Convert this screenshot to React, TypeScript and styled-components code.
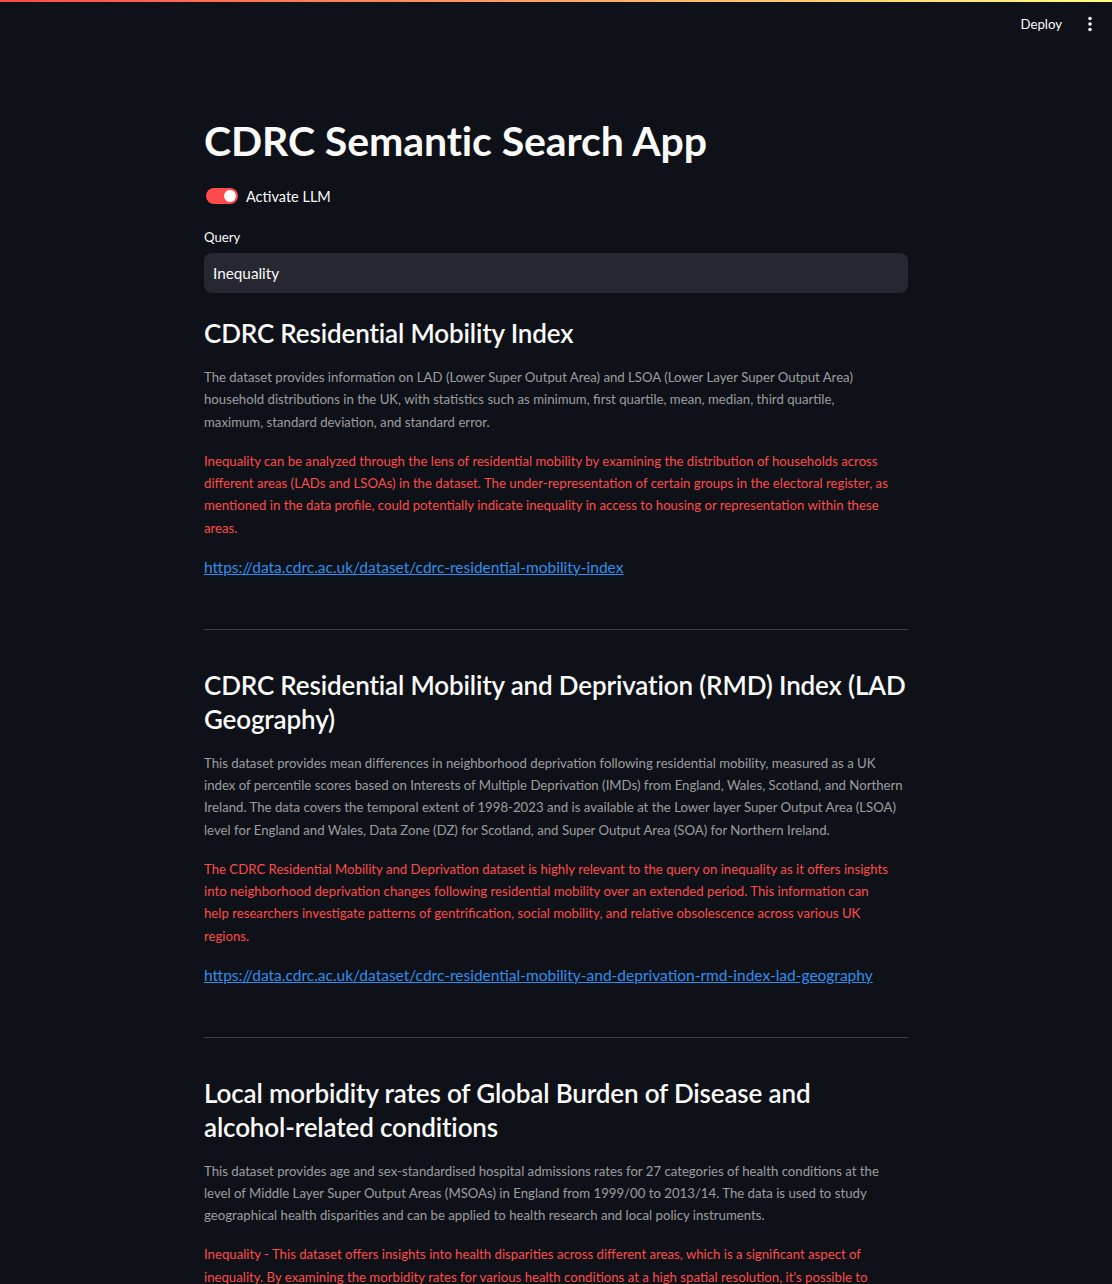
import React from "react";
import styled, { createGlobalStyle } from "styled-components";

const GlobalStyle = createGlobalStyle`
  html, body {
    margin: 0;
    padding: 0;
    background: #0e1117;
    color: #fafafa;
    font-family: Lato, "Noto Sans", sans-serif;
  }
  * { box-sizing: border-box; }
`;

const Header = styled.header`
  height: 60px;
  display: flex;
  flex-direction: column;
`;

const Decoration = styled.div`
  height: 2px;
  background: linear-gradient(90deg, #ff4b4b, #fffd80);
`;

const Toolbar = styled.div`
  height: 44px;
  display: flex;
  align-items: center;
  justify-content: flex-end;
  padding-right: 6px;
`;

const DeployButton = styled.button`
  background: transparent;
  border: none;
  color: #fafafa;
  font-family: inherit;
  font-size: 13.2px;
  padding: 4px 12px;
  cursor: pointer;
`;

const MenuButton = styled.button`
  width: 32px;
  height: 32px;
  background: transparent;
  border: none;
  display: flex;
  align-items: center;
  justify-content: center;
  padding: 0;
  cursor: pointer;
`;

const Main = styled.main`
  width: 704px;
  margin: 0 auto;
  padding: 55px 0 60px;
  display: flex;
  flex-direction: column;
`;

const Title = styled.h1`
  margin: 0;
  font-size: 41px;
  font-weight: 700;
  line-height: 52.8px;
  letter-spacing: -0.1px;
`;

const ToggleRow = styled.label`
  margin-top: 16.5px;
  height: 24px;
  display: flex;
  align-items: center;
  gap: 8px;
  padding-left: 2px;
  font-size: 14.5px;
`;

const Track = styled.span<{ $on: boolean }>`
  width: 32px;
  height: 16px;
  border-radius: 8px;
  background: ${(p) => (p.$on ? "#ff4b4b" : "#31333f")};
  display: flex;
  align-items: center;
  justify-content: ${(p) => (p.$on ? "flex-end" : "flex-start")};
  padding: 0 2px;
`;

const Knob = styled.span`
  width: 12px;
  height: 12px;
  border-radius: 50%;
  background: #ffffff;
`;

const FieldLabel = styled.div`
  margin-top: 18.5px;
  font-size: 13.2px;
  line-height: 21px;
`;

const Input = styled.div`
  margin-top: 5.5px;
  height: 40px;
  border-radius: 8px;
  background: #262730;
  display: flex;
  align-items: center;
  padding-left: 9px;
  font-size: 15.3px;
  color: #fafafa;
`;

const Section = styled.section<{ $first?: boolean }>`
  margin-top: ${(p) => (p.$first ? "24px" : "0")};
  display: flex;
  flex-direction: column;
`;

const Heading = styled.h3`
  margin: 0;
  font-size: 26px;
  font-weight: 600;
  line-height: 33.6px;
  letter-spacing: -0.15px;
  white-space: pre-line;
`;

const Caption = styled.p<{ $tone: "muted" | "red" }>`
  margin: ${(p) => (p.$tone === "muted" ? "15px" : "16.4px")} 0 0;
  font-size: 13.2px;
  line-height: 22.4px;
  white-space: pre-line;
  color: ${(p) => (p.$tone === "muted" ? "rgba(250, 250, 250, 0.6)" : "#ff4b4b")};
`;

const LinkLine = styled.a`
  margin-top: 15.5px;
  font-size: 15.5px;
  line-height: 25.6px;
  color: #2f8ff0;
  text-decoration: underline;
  align-self: flex-start;
`;

const Divider = styled.hr`
  width: 100%;
  margin: 48.6px 0 39.5px;
  border: none;
  border-top: 1px solid rgba(250, 250, 250, 0.2);
`;

type Result = { title: string[]; description: string[]; relevance: string[]; url: string };

const results: Result[] = [
  {
    title: ["CDRC Residential Mobility Index"],
    description: [
      "The dataset provides information on LAD (Lower Super Output Area) and LSOA (Lower Layer Super Output Area)",
      "household distributions in the UK, with statistics such as minimum, first quartile, mean, median, third quartile,",
      "maximum, standard deviation, and standard error.",
    ],
    relevance: [
      "Inequality can be analyzed through the lens of residential mobility by examining the distribution of households across",
      "different areas (LADs and LSOAs) in the dataset. The under-representation of certain groups in the electoral register, as",
      "mentioned in the data profile, could potentially indicate inequality in access to housing or representation within these",
      "areas.",
    ],
    url: "https://data.cdrc.ac.uk/dataset/cdrc-residential-mobility-index",
  },
  {
    title: ["CDRC Residential Mobility and Deprivation (RMD) Index (LAD", "Geography)"],
    description: [
      "This dataset provides mean differences in neighborhood deprivation following residential mobility, measured as a UK",
      "index of percentile scores based on Interests of Multiple Deprivation (IMDs) from England, Wales, Scotland, and Northern",
      "Ireland. The data covers the temporal extent of 1998-2023 and is available at the Lower layer Super Output Area (LSOA)",
      "level for England and Wales, Data Zone (DZ) for Scotland, and Super Output Area (SOA) for Northern Ireland.",
    ],
    relevance: [
      "The CDRC Residential Mobility and Deprivation dataset is highly relevant to the query on inequality as it offers insights",
      "into neighborhood deprivation changes following residential mobility over an extended period. This information can",
      "help researchers investigate patterns of gentrification, social mobility, and relative obsolescence across various UK",
      "regions.",
    ],
    url: "https://data.cdrc.ac.uk/dataset/cdrc-residential-mobility-and-deprivation-rmd-index-lad-geography",
  },
  {
    title: ["Local morbidity rates of Global Burden of Disease and", "alcohol-related conditions"],
    description: [
      "This dataset provides age and sex-standardised hospital admissions rates for 27 categories of health conditions at the",
      "level of Middle Layer Super Output Areas (MSOAs) in England from 1999/00 to 2013/14. The data is used to study",
      "geographical health disparities and can be applied to health research and local policy instruments.",
    ],
    relevance: [
      "Inequality - This dataset offers insights into health disparities across different areas, which is a significant aspect of",
      "inequality. By examining the morbidity rates for various health conditions at a high spatial resolution, it's possible to",
      "identify areas with higher rates of disease and alcohol-related conditions, which may be linked to socioeconomic",
      "inequalities.",
    ],
    url: "https://data.cdrc.ac.uk/dataset/local-morbidity-rates-of-global-burden-of-disease-and-alcohol-related-conditions",
  },
];

function KebabIcon() {
  return (
    <svg width="4" height="16" viewBox="0 0 4 16" aria-hidden="true">
      <circle cx="2" cy="2.5" r="1.8" fill="#fafafa" />
      <circle cx="2" cy="8" r="1.8" fill="#fafafa" />
      <circle cx="2" cy="13.5" r="1.8" fill="#fafafa" />
    </svg>
  );
}

export default function App() {
  return (
    <>
      <GlobalStyle />
      <Header>
        <Decoration />
        <Toolbar>
          <DeployButton>Deploy</DeployButton>
          <MenuButton aria-label="Main menu">
            <KebabIcon />
          </MenuButton>
        </Toolbar>
      </Header>
      <Main>
        <Title>CDRC Semantic Search App</Title>
        <ToggleRow>
          <Track $on>
            <Knob />
          </Track>
          Activate LLM
        </ToggleRow>
        <FieldLabel>Query</FieldLabel>
        <Input>Inequality</Input>
        {results.map((r, i) => (
          <React.Fragment key={r.url}>
            {i > 0 && <Divider />}
            <Section $first={i === 0}>
              <Heading>{r.title.join("\n")}</Heading>
              <Caption $tone="muted">{r.description.join("\n")}</Caption>
              <Caption $tone="red">{r.relevance.join("\n")}</Caption>
              <LinkLine href={r.url}>{r.url}</LinkLine>
            </Section>
          </React.Fragment>
        ))}
      </Main>
    </>
  );
}
